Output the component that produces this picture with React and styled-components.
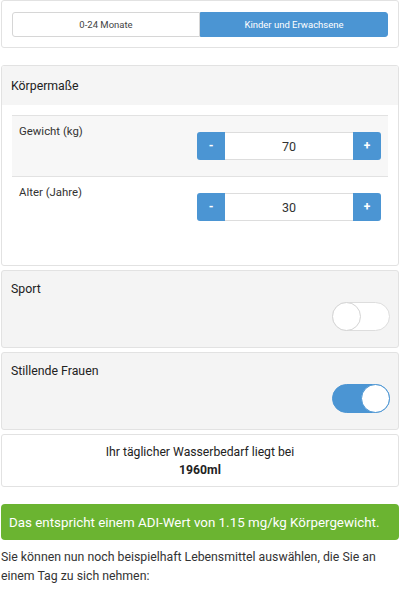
import styled, { createGlobalStyle } from "styled-components";
import { useState } from "react";

const GlobalStyle = createGlobalStyle`
    body {
        margin: 0;
        background: #fff;
        font-family: Roboto, "Liberation Sans", sans-serif;
        color: #333;
    }
    * { box-sizing: border-box; }
`;

const Page = styled.div`
    width: 400px;
    padding: 0 1px;
`;

const Card = styled.div`
    border: 1px solid #e2e2e2;
    border-radius: 3px;
    background: ${props => props.$bg || "#fff"};
`;

const ModeCard = styled(Card)`
    padding: 11px 10px 10px 10px;
`;

const Segmented = styled.div`
    display: grid;
    grid-template-columns: 1fr 1fr;
    height: 25px;
`;

const Segment = styled.div`
    display: flex;
    align-items: center;
    justify-content: center;
    font-size: 9.5px;
    color: ${props => props.$active ? "#fff" : "#444"};
    background: ${props => props.$active ? "#4b95d3" : "#fff"};
    border: 1px solid ${props => props.$active ? "#4b95d3" : "#d6d6d6"};
    border-radius: ${props => props.$first ? "3px 0 0 3px" : "0 3px 3px 0"};
`;

const Panel = styled(Card)`
    margin-top: 17px;
    overflow: hidden;
`;

const PanelHeader = styled.div`
    background: #f5f5f5;
    height: 39px;
    display: flex;
    align-items: center;
    padding: 0 9px;
    font-size: 12.3px;
    color: #222;
`;

const PanelBody = styled.div`
    padding: 10px 10px 28px 10px;
`;

const Row = styled.div`
    display: flex;
    justify-content: space-between;
    align-items: flex-start;
    padding: 7px 7px 16px 7px;
    border-top: 1px solid #e2e2e2;
    background: ${props => props.$shaded ? "#f7f7f7" : "#fff"};
    ${props => props.$shaded && "border-bottom: 1px solid #e2e2e2;"}
    & + & { border-top: none; }
`;

const RowLabel = styled.div`
    font-size: 11.4px;
    line-height: 16px;
`;

const InputGroup = styled.div`
    display: flex;
    width: 184px;
    height: 28px;
    margin-top: 9px;
`;

const StepButton = styled.div`
    width: 28px;
    background: #4b95d3;
    color: #fff;
    display: flex;
    align-items: center;
    justify-content: center;
    font-size: 12px;
    font-weight: 700;
    border-radius: ${props => props.$left ? "3px 0 0 3px" : "0 3px 3px 0"};
`;

const ValueBox = styled.div`
    flex: 1;
    display: flex;
    align-items: center;
    justify-content: center;
    font-size: 12.5px;
    border-top: 1px solid #ddd;
    border-bottom: 1px solid #ddd;
    background: #fff;
`;

const OptionCard = styled(Card)`
    margin-top: 4px;
    padding: 9px 8px 16px 9px;
`;

const OptionTitle = styled.div`
    font-size: 12.3px;
    line-height: 18px;
    color: #222;
`;

const ToggleRow = styled.div`
    display: flex;
    justify-content: flex-end;
    margin-top: 4px;
`;

const Toggle = styled.div`
    position: relative;
    width: 58px;
    height: 29px;
    border-radius: 15px;
    background: ${props => props.$on ? "#4b95d3" : "#fff"};
    border: 1px solid ${props => props.$on ? "#4b95d3" : "#ddd"};
    cursor: pointer;
`;

const Knob = styled.div`
    position: absolute;
    top: -1px;
    left: ${props => props.$on ? "28px" : "-1px"};
    width: 29px;
    height: 29px;
    border-radius: 50%;
    background: #fff;
    border: 1px solid ${props => props.$on ? "#4b95d3" : "#d4d4d4"};
`;

const ResultCard = styled(Card)`
    margin-top: 4px;
    padding: 8px 10px 7px;
    text-align: center;
    font-size: 12.2px;
    line-height: 18px;
    color: #222;
`;

const Strong = styled.div`
    font-weight: 700;
`;

const Banner = styled.div`
    margin-top: 17px;
    height: 36px;
    background: #6bb431;
    color: #fff;
    border-radius: 4px;
    display: flex;
    align-items: center;
    padding: 0 8px;
    font-size: 13.35px;
    white-space: nowrap;
`;

const Note = styled.p`
    margin: 8px 0 0;
    font-size: 12.3px;
    line-height: 19px;
    color: #333;
`;

function Option({ title, on, onToggle }) {
    return (
        <OptionCard $bg="#f4f4f4">
            <OptionTitle>{title}</OptionTitle>
            <ToggleRow>
                <Toggle $on={on} onClick={onToggle}>
                    <Knob $on={on} />
                </Toggle>
            </ToggleRow>
        </OptionCard>
    )
}

export default function App() {
    const [sport, setSport] = useState(false)
    const [stillend, setStillend] = useState(true)

    return (
        <Page>
            <GlobalStyle />
            <ModeCard>
                <Segmented>
                    <Segment $first>0-24 Monate</Segment>
                    <Segment $active>Kinder und Erwachsene</Segment>
                </Segmented>
            </ModeCard>

            <Panel>
                <PanelHeader>Körpermaße</PanelHeader>
                <PanelBody>
                    <Row $shaded>
                        <RowLabel>Gewicht (kg)</RowLabel>
                        <InputGroup>
                            <StepButton $left>-</StepButton>
                            <ValueBox>70</ValueBox>
                            <StepButton>+</StepButton>
                        </InputGroup>
                    </Row>
                    <Row>
                        <RowLabel>Alter (Jahre)</RowLabel>
                        <InputGroup>
                            <StepButton $left>-</StepButton>
                            <ValueBox>30</ValueBox>
                            <StepButton>+</StepButton>
                        </InputGroup>
                    </Row>
                </PanelBody>
            </Panel>

            <Option title="Sport" on={sport} onToggle={() => setSport(p => !p)} />
            <Option title="Stillende Frauen" on={stillend} onToggle={() => setStillend(p => !p)} />

            <ResultCard>
                Ihr täglicher Wasserbedarf liegt bei
                <Strong>1960ml</Strong>
            </ResultCard>

            <Banner>Das entspricht einem ADI-Wert von 1.15 mg/kg Körpergewicht.</Banner>

            <Note>Sie können nun noch beispielhaft Lebensmittel auswählen, die Sie an einem Tag zu sich nehmen:</Note>
        </Page>
    )
}
